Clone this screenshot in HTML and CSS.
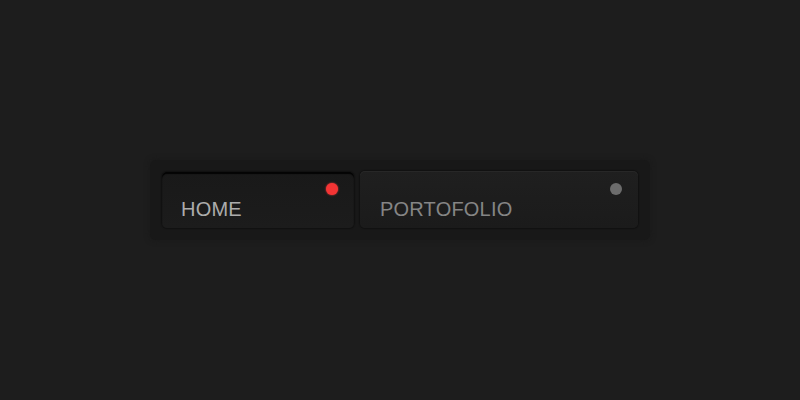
FILE: index.html
```html
<!DOCTYPE html>
<html lang="en">
<head>
  <meta charset="UTF-8" />
  <title>Menu</title>
  <link rel="stylesheet" href="styles.css">
</head>
<body>
  <nav class="menu">
    <a class="menu-item active" href="#">HOME<span class="dot"></span></a>
    <a class="menu-item wide" href="#">PORTOFOLIO<span class="dot"></span></a>
  </nav>
</body>
</html>
```

FILE: styles.css
```css
* { box-sizing: border-box; margin: 0; padding: 0; }
body {
  background: #1d1d1d;
  font-family: 'Liberation Sans', Arial, sans-serif;
  display: flex;
  justify-content: center;
  padding-top: 160px;
  height: 100vh;
}
.menu {
  display: flex;
  gap: 6px;
  width: 500px;
  height: 80px;
  padding: 12px;
  background: #181818;
  border-radius: 6px;
  box-shadow: 0 0 5px 1px #1a1a1a;
}
.menu-item {
  position: relative;
  display: block;
  height: 56px;
  padding: 25px 20px 0;
  font-size: 20px;
  line-height: 24px;
  letter-spacing: 0.2px;
  color: #858585;
  text-decoration: none;
  background: linear-gradient(#1f1f1f, #1b1b1b);
  border-radius: 5px;
  box-shadow: 0 0 1px 1px #111, inset 0 1px 0 #272727;
}
.menu-item.active {
  width: 192px;
  padding-left: 19px;
  color: #acacac;
  background: linear-gradient(#191919, #1c1c1c);
  box-shadow: 0 0 1px 1px #111, inset 0 2px 1px #040404;
}
.menu-item.wide { flex: 1; margin-top: -1px; height: 57px; padding-top: 26px; }
.dot {
  position: absolute;
  top: 12px;
  right: 16px;
  width: 12px;
  height: 12px;
  border-radius: 50%;
  background: #6c6c6c;
}
.active .dot {
  top: 11px;
  right: 16px;
  background: #f43434;
  box-shadow: 0 0 2px #ff4040;
}
```
